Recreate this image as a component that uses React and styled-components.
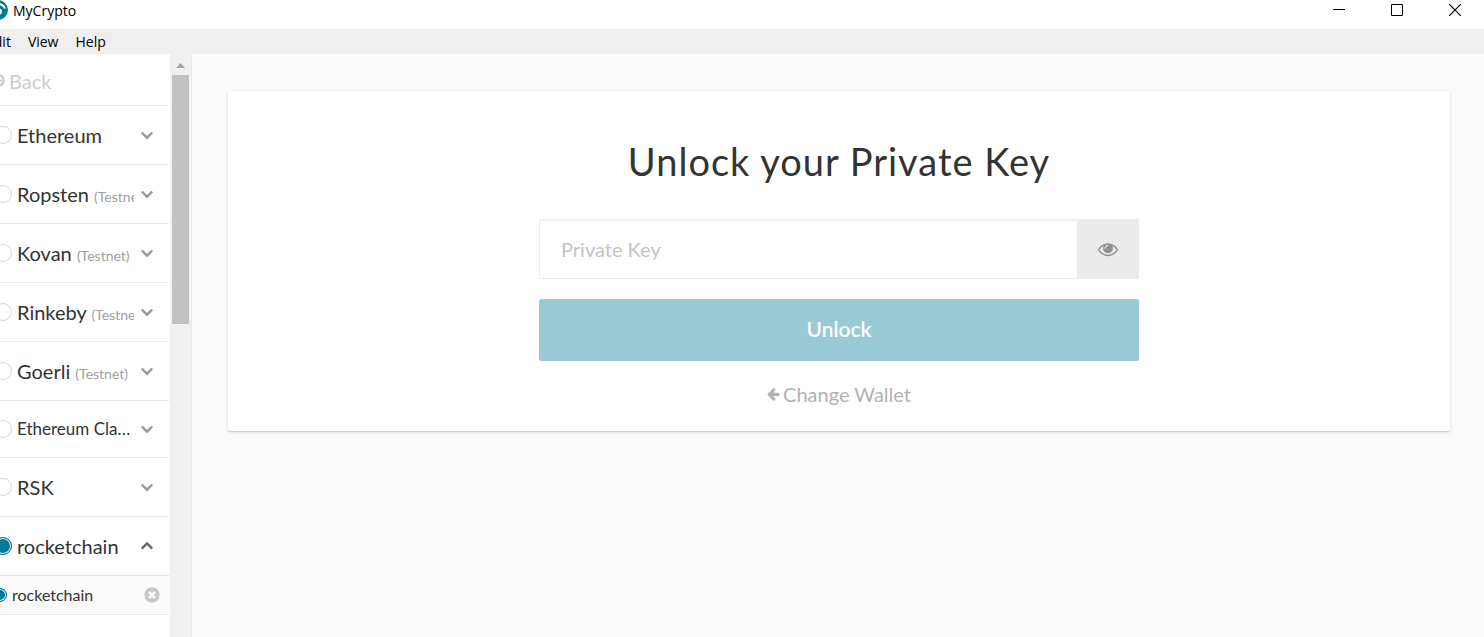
import React from "react";
import styled, { createGlobalStyle } from "styled-components";

const Global = createGlobalStyle`
  * { box-sizing: border-box; }
  html, body { margin: 0; overflow: hidden; }
  body { background: #fafafa; color: #333; font-family: Lato, "Liberation Sans", sans-serif; }
  button, input { font-family: inherit; }
`;

const bleed = "24px";

const Window = styled.div`
  display: flex;
  flex-direction: column;
  height: 100vh;
  margin-left: -${bleed};
  overflow: hidden;
`;

const TitleBar = styled.header`
  display: flex;
  align-items: flex-start;
  flex: none;
  height: 29px;
  padding-left: 12px;
  background: #fff;
`;

const AppName = styled.span`
  flex: 1;
  margin-left: 5px;
  color: #000;
  font: 14px/21px "Open Sans", "Noto Sans", sans-serif;
`;

const Logo = styled.svg`
  width: 20px;
  height: 20px;
`;

const WindowControls = styled.div`
  display: flex;
`;

const WindowButton = styled.button`
  width: 58px;
  height: 20px;
  padding: 0;
  border: 0;
  background: none;
  line-height: 0;
`;

const MenuBar = styled.nav`
  display: flex;
  flex: none;
  gap: 17px;
  height: 25px;
  padding-left: 10px;
  background: #efefef;
`;

const MenuItem = styled.button`
  padding: 0;
  border: 0;
  background: none;
  color: #000;
  font: 14px/25px "Open Sans", "Noto Sans", sans-serif;
`;

const Body = styled.div`
  display: flex;
  flex: 1;
  min-height: 0;
`;

const Sidebar = styled.aside`
  flex: none;
  width: 194px;
  overflow: hidden;
  border-right: 1px solid #fff;
  background: #fff;
`;

const BackButton = styled.button`
  display: flex;
  align-items: center;
  gap: 4px;
  width: 100%;
  height: 52px;
  padding: 2px 0 0 16px;
  border: 0;
  border-bottom: 1px solid #ebebeb;
  background: none;
  color: #ccc;
  font-size: 20px;
`;

const NetworkList = styled.ul`
  margin: 0;
  padding: 0;
  list-style: none;
`;

const NetworkRow = styled.li`
  display: flex;
  align-items: center;
  height: ${(p) => (p.$compact ? "57px" : "59px")};
  padding: 0 15px 0 18px;
  border-bottom: 1px solid ${(p) => (p.$open ? "#e0e0e0" : "#e8e8e8")};
`;

const NodeRow = styled(NetworkRow)`
  height: 39px;
  padding: 0 9px 0 17px;
  background: #fafafa;
`;

const Radio = styled.input`
  appearance: none;
  flex: none;
  width: ${(p) => (p.$small ? "14px" : "18px")};
  height: ${(p) => (p.$small ? "14px" : "18px")};
  margin: 0 5px 0 0;
  border: 1px solid #d6d6d6;
  border-radius: 50%;
  background: #fff;
  &:checked {
    border-color: #007a99;
    background: #007a99;
    box-shadow: inset 0 0 0 1px #fff;
  }
`;

const NetworkLabel = styled.label`
  flex: 1;
  min-width: 0;
  margin-right: ${(p) => (p.$compact ? "4px" : "6px")};
  overflow: hidden;
  white-space: nowrap;
  text-overflow: ${(p) => (p.$compact ? "ellipsis" : "clip")};
  font-size: ${(p) => (p.$compact ? "17px" : "20px")};
  line-height: 26px;
`;

const NodeLabel = styled(NetworkLabel)`
  font-size: 16px;
`;

const Testnet = styled.small`
  color: #a0a0a0;
  font-size: 14px;
  line-height: 14px;
`;

const IconButton = styled.button`
  display: flex;
  flex: none;
  padding: 0;
  border: 0;
  background: none;
  color: ${(p) => p.$color || "#999"};
`;

const Scrollbar = styled.div`
  display: flex;
  flex-direction: column;
  align-items: center;
  flex: none;
  width: 22px;
  border-right: 1px solid #e8e8e8;
  background: #f0f0f0;
`;

const ScrollArrow = styled.svg`
  flex: none;
  width: 17px;
  height: 21px;
`;

const ScrollThumb = styled.div`
  width: 17px;
  height: 249px;
  background: #c1c1c1;
`;

const Main = styled.main`
  flex: 1;
  min-width: 0;
  padding: 37px 34px 37px 36px;
  background: #fafafa;
`;

const Card = styled.section`
  display: flex;
  flex-direction: column;
  align-items: center;
  padding: 47px 20px 24px;
  border-radius: 2px;
  background: #fff;
  box-shadow: 0 1px 1px #ccc, 0 1px 4px rgba(0, 0, 0, 0.1);
`;

const Title = styled.h1`
  margin: 0 0 35px;
  font-size: 38px;
  font-weight: 400;
  line-height: 46px;
  letter-spacing: 1px;
`;

const UnlockForm = styled.form`
  width: 100%;
  max-width: 600px;
`;

const KeyField = styled.div`
  display: flex;
  height: 60px;
  margin-bottom: 20px;
`;

const KeyInput = styled.input`
  flex: 1;
  min-width: 0;
  padding: 0 21px;
  border: 1px solid #e5ecf3;
  border-right: 0;
  border-radius: 2px 0 0 2px;
  background: #fff;
  box-shadow: inset 0 1px 1px rgba(0, 0, 0, 0.05);
  color: #333;
  font-size: 20px;
  outline: 0;
  &::placeholder { color: #c4c4c4; opacity: 1; }
`;

const RevealButton = styled.button`
  display: flex;
  align-items: center;
  justify-content: center;
  width: 62px;
  padding: 0;
  border: 0;
  border-radius: 0 2px 2px 0;
  background: #ebebeb;
  color: #919191;
`;

const SubmitButton = styled.button`
  width: 100%;
  height: 62px;
  padding: 0 0 4px;
  border: 0;
  border-radius: 2px;
  background: #99c9d5;
  color: #fff;
  font-size: 21px;
  font-weight: 600;
`;

const ChangeWallet = styled.button`
  display: flex;
  align-items: center;
  justify-content: center;
  gap: 3px;
  margin: 20px auto 0;
  padding: 0;
  border: 0;
  background: none;
  color: #b2b2b2;
  font-size: 20px;
  line-height: 26px;
`;

const Chevron = ({ up }) => (
  <svg width="14" height="12" viewBox="0 0 14 12" fill="none" stroke="currentColor" strokeWidth="2.4">
    <path d={up ? "M1.8 8.7 7 3.5l5.2 5.2" : "M1.8 3.5 7 8.7l5.2-5.2"} />
  </svg>
);

const BackIcon = () => (
  <svg width="13" height="13" viewBox="0 0 13 13" fill="none" stroke="currentColor">
    <circle cx="6.5" cy="6.5" r="5.2" strokeWidth="2.4" />
    <path d="M3.500 6.500h7" strokeWidth="2" />
  </svg>
);

const RemoveIcon = () => (
  <svg width="16" height="16" viewBox="0 0 16 16">
    <circle cx="8" cy="8" r="7.7" fill="currentColor" />
    <path d="m5 5 6 6m0-6-6 6" stroke="#fafafa" strokeWidth="2.6" />
  </svg>
);

const EyeIcon = () => (
  <svg width="20" height="20" viewBox="0 0 1792 1792" fill="currentColor">
    <path d="M1664 960q-152-236-381-353 61 104 61 225 0 185-131.5 316.5t-316.5 131.5-316.5-131.5-131.5-316.5q0-121 61-225-229 117-381 353 133 205 333.5 326.5t434.5 121.5 434.5-121.5 333.5-326.5zm-720-384q0-20-14-34t-34-14q-125 0-214.5 89.5t-89.5 214.5q0 20 14 34t34 14 34-14 14-34q0-86 61-147t147-61q20 0 34-14t14-34zm848 384q0 34-20 69-140 230-376.5 368.5t-499.5 138.5-499.5-139-376.5-368q-20-35-20-69t20-69q140-229 376.5-368t499.5-139 499.5 139 376.5 368q20 35 20 69z" />
  </svg>
);

const ArrowLeftIcon = () => (
  <svg width="13" height="14" viewBox="128 60 1600 1700" fill="currentColor">
    <path d="M1664 896v128q0 53-32.5 90.5t-84.5 37.5h-704l293 294q38 36 38 90t-38 90l-75 76q-37 37-90 37-52 0-91-37l-651-652q-37-37-37-90 0-52 37-91l651-650q38-38 91-38 52 0 90 38l75 74q38 38 38 91t-38 91l-293 293h704q52 0 84.5 37.5t32.5 90.5z" />
  </svg>
);

const networks = [
  { name: "Ethereum" },
  { name: "Ropsten", testnet: true },
  { name: "Kovan", testnet: true },
  { name: "Rinkeby", testnet: true },
  { name: "Goerli", testnet: true },
  { name: "Ethereum Classic", compact: true },
  { name: "RSK" },
  { name: "rocketchain", open: true },
];

function Network({ name, testnet, compact, open }) {
  const id = "network-" + name.replace(" ", "-");
  return (
    <NetworkRow $compact={compact} $open={open}>
      <Radio type="radio" name="network" id={id} defaultChecked={open} />
      <NetworkLabel htmlFor={id} $compact={compact}>
        {name} {testnet && <Testnet>(Testnet)</Testnet>}
      </NetworkLabel>
      <IconButton aria-label={"Nodes of " + name} aria-expanded={!!open} $color={open ? "#666" : "#999"}>
        <Chevron up={open} />
      </IconButton>
    </NetworkRow>
  );
}

export default function App() {
  return (
    <Window>
      <Global />
      <TitleBar>
        <Logo viewBox="0 0 20 20" fill="none" aria-hidden="true">
          <circle cx="10" cy="10" r="10" fill="#007a99" />
          <path d="M4 8.500a7 7 0 0 1 13 0M7 11c2-3 6-2 6 .5s-2 3-5 3" stroke="#fff" strokeWidth="2" />
        </Logo>
        <AppName>MyCrypto</AppName>
        <WindowControls>
          <WindowButton aria-label="Minimize">
            <svg width="12" height="12"><path d="M0 5.500h12" stroke="#000" /></svg>
          </WindowButton>
          <WindowButton aria-label="Maximize">
            <svg width="12" height="12"><path d="M.5.5h11v11H.5z" fill="none" stroke="#000" /></svg>
          </WindowButton>
          <WindowButton aria-label="Close">
            <svg width="12" height="12"><path d="m0 0 12 12M12 0 0 12" stroke="#000" strokeWidth="1.200" /></svg>
          </WindowButton>
        </WindowControls>
      </TitleBar>
      <MenuBar>
        <MenuItem>Edit</MenuItem>
        <MenuItem>View</MenuItem>
        <MenuItem>Help</MenuItem>
      </MenuBar>
      <Body>
        <Sidebar>
          <BackButton><BackIcon />Back</BackButton>
          <NetworkList>
            {networks.map((n) => <Network key={n.name} {...n} />)}
            <NodeRow>
              <Radio $small type="radio" name="node" id="node-rocketchain" defaultChecked />
              <NodeLabel htmlFor="node-rocketchain">rocketchain</NodeLabel>
              <IconButton aria-label="Remove node" $color="#c8c8c8"><RemoveIcon /></IconButton>
            </NodeRow>
          </NetworkList>
        </Sidebar>
        <Scrollbar>
          <ScrollArrow viewBox="0 0 17 21"><path d="M4 14l4.500-5 4.500 5z" fill="#a3a3a3" /></ScrollArrow>
          <ScrollThumb />
        </Scrollbar>
        <Main>
          <Card>
            <Title>Unlock your Private Key</Title>
            <UnlockForm onSubmit={(e) => e.preventDefault()}>
              <KeyField>
                <KeyInput type="text" placeholder="Private Key" aria-label="Private Key" />
                <RevealButton type="button" aria-label="Show private key"><EyeIcon /></RevealButton>
              </KeyField>
              <SubmitButton type="submit">Unlock</SubmitButton>
              <ChangeWallet type="button"><ArrowLeftIcon />Change Wallet</ChangeWallet>
            </UnlockForm>
          </Card>
        </Main>
      </Body>
    </Window>
  );
}
